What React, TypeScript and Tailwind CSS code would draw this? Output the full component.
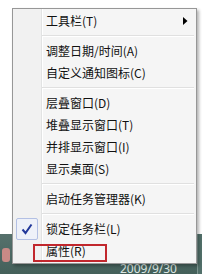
import React from "react";

type Row = { kind: "item"; label: string; sub?: boolean; checked?: boolean } | { kind: "sep" };

const rows: Row[] = [
  { kind: "item", label: "工具栏(T)", sub: true },
  { kind: "sep" },
  { kind: "item", label: "调整日期/时间(A)" },
  { kind: "item", label: "自定义通知图标(C)" },
  { kind: "sep" },
  { kind: "item", label: "层叠窗口(D)" },
  { kind: "item", label: "堆叠显示窗口(T)" },
  { kind: "item", label: "并排显示窗口(I)" },
  { kind: "item", label: "显示桌面(S)" },
  { kind: "sep" },
  { kind: "item", label: "启动任务管理器(K)" },
  { kind: "sep" },
  { kind: "item", label: "锁定任务栏(L)", checked: true },
  { kind: "item", label: "属性(R)" },
];

function CheckBox() {
  return (
    <div className="ml-[1px] flex h-[22px] w-[22px] items-center justify-center rounded-[2px] border border-[#b3c0e4] bg-[#eef1f9]">
      <svg width="12" height="12" viewBox="0 0 12 12">
        <path d="M1.5 6.5 L4.5 10 L10.5 1.5" fill="none" stroke="#22389a" strokeWidth="2" />
      </svg>
    </div>
  );
}

function MenuRow({ row }: { row: Row }) {
  if (row.kind === "sep") {
    return (
      <div className="flex h-[8px] flex-col justify-center pl-[27px]">
        <div className="border-t border-b border-t-[#e0e0e0] border-b-white" />
      </div>
    );
  }
  return (
    <div className="flex h-[22px] items-center">
      <div className="flex w-[27px] items-center">{row.checked ? <CheckBox /> : null}</div>
      <span className="flex-1 pl-[4px] text-[12px] leading-[16px] text-[#111]">{row.label}</span>
      {row.sub ? (
        <svg width="5" height="8" viewBox="0 0 5 8" className="mr-[6px]">
          <path d="M0 0 L4.5 4 L0 8 Z" fill="#000" />
        </svg>
      ) : null}
    </div>
  );
}

export default function App() {
  return (
    <div
      className="relative h-[274px] w-[202px] overflow-hidden bg-white"
      style={{ fontFamily: '"Noto Sans CJK SC", "Noto Sans", sans-serif' }}
    >
      <div className="flex h-full flex-col">
        <div className="h-[234px] bg-white" />
        <div className="relative flex h-[40px] bg-gradient-to-b from-[#56716c] to-[#44605a]">
          <div className="mt-[14px] ml-[2px] h-[14px] w-[8px] rounded-[3px] bg-[#c98a86]" />
          <span
            className="pt-[27px] pl-[110px] text-[12px] leading-[16px] text-[#dce6e2]"
            style={{ fontFamily: '"Noto Sans", sans-serif' }}
          >
            2009/9/30
          </span>
          <div className="ml-auto h-full w-[5px] border-l border-[#7d9590] bg-[#52706a]" />
        </div>
      </div>

      <div className="absolute left-[12px] top-[8px] w-[185px] border border-[#979797] bg-[linear-gradient(to_right,#f1f1f1_28px,#e2e3e3_28px,#e2e3e3_29px,#ffffff_29px,#ffffff_30px,#f5f5f5_30px)] px-[2px] py-[1px] shadow-[2px_2px_3px_rgba(0,0,0,0.3)]">
        {rows.map((row, i) => (
          <MenuRow key={i} row={row} />
        ))}
      </div>

      <div className="absolute left-[33px] top-[244px] h-[18px] w-[74px] border-2 border-[#c1272d]" />
    </div>
  );
}
